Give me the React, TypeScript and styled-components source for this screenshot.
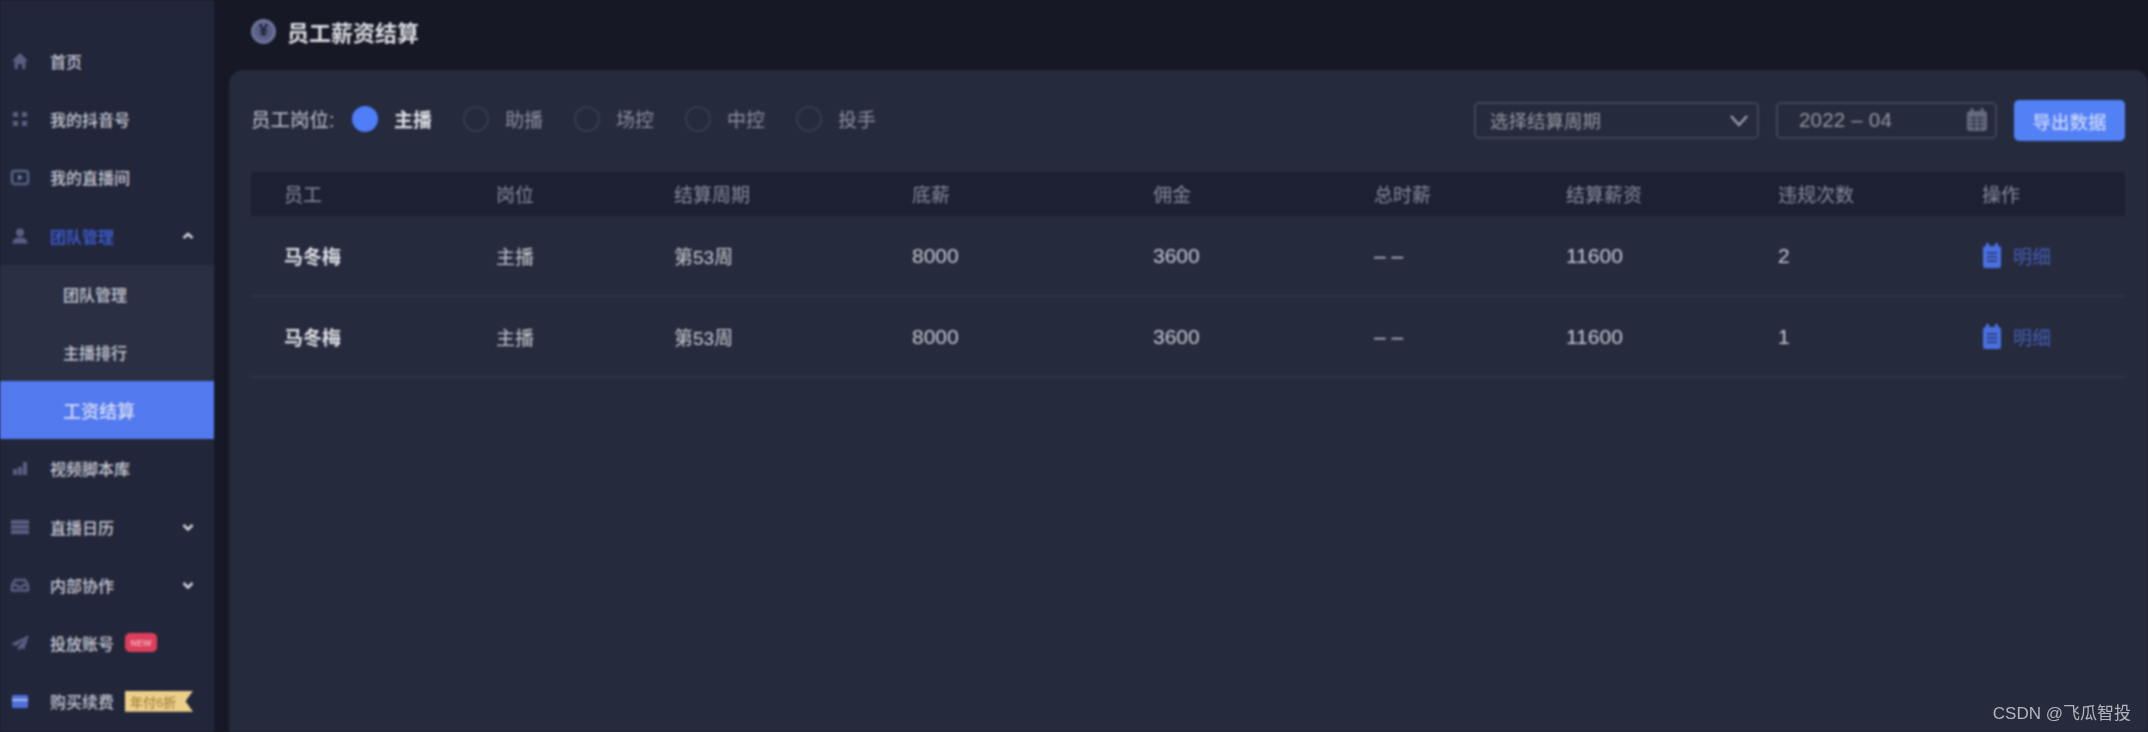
import React from "react";
import styled, { createGlobalStyle } from "styled-components";

const Global = createGlobalStyle`
  html, body { margin: 0; padding: 0; background: #171825; }
  body { font-family: "Liberation Sans", "Noto Sans CJK SC", sans-serif; }
`;

const Page = styled.div`
  position: relative;
  width: 2148px;
  height: 732px;
  overflow: hidden;
  background: #171825;
`;
const Shell = styled.div`
  display: flex;
  width: 2148px;
  height: 732px;
  filter: blur(0.8px);
`;
const Sidebar = styled.nav`
  width: 214px;
  flex: none;
  display: flex;
  flex-direction: column;
  padding-top: 32px;
  background: #22263a;
  box-sizing: border-box;
`;
const NavRow = styled.div<{ $tone?: string }>`
  height: 58.2px;
  flex: none;
  display: flex;
  align-items: center;
  padding: 0 18px 0 10px;
  box-sizing: border-box;
  font-size: 16px;
  font-weight: 500;
  color: ${(p) => (p.$tone === "blue" ? "#3e5fd6" : "#c6c8d3")};
`;
const NavIcon = styled.svg`
  width: 20px;
  height: 20px;
  flex: none;
  margin-right: 20px;
`;
const Chevron = styled.svg`
  width: 16px;
  height: 16px;
  margin-left: auto;
  color: #d0d2da;
`;
const SubRow = styled.div<{ $active?: boolean }>`
  height: 58.2px;
  flex: none;
  display: flex;
  align-items: center;
  padding-left: 63px;
  box-sizing: border-box;
  font-size: ${(p) => (p.$active ? 18 : 16)}px;
  font-weight: 500;
  color: ${(p) => (p.$active ? "#d5dcf8" : "#c6c8d3")};
  background: ${(p) => (p.$active ? "#5279ee" : "#2b2f44")};
`;
const NewBadge = styled.span`
  width: 32px;
  height: 19px;
  margin-left: 11px;
  border-radius: 5px;
  background: #dc3f5c;
  color: #f3a5b3;
  font-size: 9px;
  font-weight: 700;
  display: flex;
  align-items: center;
  justify-content: center;
`;
const GoldBadge = styled.span`
  width: 68px;
  height: 21px;
  margin-left: 11px;
  background: #ecd08a;
  color: #a98640;
  font-size: 13px;
  display: flex;
  align-items: center;
  padding-left: 5px;
  box-sizing: border-box;
  clip-path: polygon(0 0, 100% 0, 89% 50%, 100% 100%, 0 100%);
`;
const Main = styled.main`
  flex: 1;
  min-width: 0;
  display: flex;
  flex-direction: column;
`;
const TitleBar = styled.header`
  height: 70px;
  flex: none;
  display: flex;
  align-items: center;
  gap: 11px;
  padding: 0 0 8px 37px;
  box-sizing: border-box;
`;
const TitleIcon = styled.div`
  width: 25px;
  height: 25px;
  border-radius: 50%;
  background: #5a6088;
  border: 3px solid #6d739a;
  box-sizing: border-box;
  color: #1d2034;
  font-size: 17px;
  font-weight: 700;
  display: flex;
  align-items: center;
  justify-content: center;
`;
const Title = styled.h1`
  margin: 0;
  font-size: 22px;
  font-weight: 700;
  color: #dcdde3;
`;
const Panel = styled.section`
  flex: 1;
  margin-left: 15px;
  padding: 30px 23px 0 22px;
  border-radius: 14px 14px 0 0;
  background: #252a3d;
  box-sizing: border-box;
`;
const FilterBar = styled.div`
  height: 41px;
  display: flex;
  align-items: center;
`;
const FilterLabel = styled.span`
  width: 101px;
  padding-bottom: 4px;
  font-size: 19.5px;
  white-space: nowrap;
  color: #c3c5cf;
`;
const RadioItem = styled.label<{ $on?: boolean }>`
  width: 111px;
  padding-bottom: 4px;
  display: flex;
  align-items: center;
  gap: 16px;
  font-size: 19px;
  font-weight: ${(p) => (p.$on ? 700 : 400)};
  color: ${(p) => (p.$on ? "#e0e1e7" : "#8b8e9f")};
`;
const RadioDot = styled.span<{ $on?: boolean }>`
  width: 26px;
  height: 26px;
  flex: none;
  border-radius: 50%;
  box-sizing: border-box;
  background: ${(p) => (p.$on ? "#4f7ef8" : "transparent")};
  border: 2px solid ${(p) => (p.$on ? "#4f7ef8" : "#383c50")};
`;
const Spacer = styled.div`
  flex: 1;
`;
const Field = styled.div<{ $w: number }>`
  width: ${(p) => p.$w}px;
  height: 37px;
  margin: 0 17px 1px 0;
  padding: 0 6px 0 14px;
  box-sizing: border-box;
  display: flex;
  align-items: center;
  justify-content: space-between;
  border: 2px solid #40445a;
  border-radius: 5px;
  font-size: 18.500px;
  color: #94979f;
`;
const DateText = styled.span`
  padding-left: 7px;
  font-size: 20.500px;
  letter-spacing: 0.2px;
`;
const ExportButton = styled.button`
  width: 111px;
  height: 41px;
  border: 0;
  padding: 0;
  border-radius: 5px;
  background: #5280f5;
  color: #c9d6fa;
  font-family: inherit;
  font-size: 18.500px;
  font-weight: 500;
`;
const Table = styled.div`
  margin-top: 31px;
`;
const Row = styled.div<{ $head?: boolean }>`
  display: grid;
  grid-template-columns: 212px 178px 238px 241px 221px 192px 212px 204px 1fr;
  align-items: center;
  height: ${(p) => (p.$head ? 44 : 81)}px;
  padding: ${(p) => (p.$head ? "0 0 2px 33px" : "0 0 0 33px")};
  box-sizing: border-box;
  font-size: 19px;
  color: ${(p) => (p.$head ? "#888b9c" : "#c8cad2")};
  background: ${(p) => (p.$head ? "#1d2033" : "transparent")};
  border-bottom: ${(p) => (p.$head ? "0" : "2px solid #30344a")};
`;
const NameCell = styled.span`
  font-weight: 700;
  color: #dfe0e6;
`;
const NumCell = styled.span`
  font-size: 21px;
`;
const Action = styled.span`
  display: flex;
  align-items: center;
  gap: 11px;
  color: #465fb8;
`;
const Watermark = styled.div`
  position: absolute;
  right: 17px;
  bottom: 8px;
  font-size: 17px;
  line-height: 20px;
  color: #b4b5ba;
`;

const c = "#5a5f82";
const icons: Record<string, React.ReactNode> = {
  home: <path fill={c} d="M10 2 2 10h2.500v8H8v-5h4v5h3.500v-8H18z" />,
  grid: (
    <g fill={c}>
      <rect x="3" y="3" width="5" height="5" />
      <rect x="12" y="3" width="5" height="5" />
      <rect x="3" y="12" width="5" height="5" />
      <rect x="12" y="12" width="5" height="5" />
    </g>
  ),
  live: (
    <g>
      <rect x="2" y="4" width="16" height="13" rx="2.500" fill="none" stroke="#566489" strokeWidth="2.400" />
      <path fill="#6d7fa8" d="M8 7.500v6l5-3z" />
    </g>
  ),
  user: (
    <g fill={c}>
      <circle cx="10" cy="6.500" r="4" />
      <path d="M2.500 17.500c0-4 3-6 7.500-6s7.500 2 7.500 6z" />
    </g>
  ),
  chart: (
    <g fill={c}>
      <rect x="3" y="11" width="4" height="6" />
      <rect x="8" y="9" width="4" height="8" />
      <rect x="13" y="4" width="4" height="13" />
    </g>
  ),
  cal: (
    <g fill={c}>
      <rect x="1" y="3" width="18" height="4" />
      <rect x="1" y="8" width="18" height="4" />
      <rect x="1" y="13" width="18" height="4" />
    </g>
  ),
  tray: <path fill="none" stroke={c} strokeWidth="2.400" d="M5 5h10l3 5v5.500H2V10zM2 10h5l1 2h4l1-2h5" />,
  plane: <path fill={c} d="M19 2 1 11l5 2 9-7-7 8v4l3-3 3 2z" />,
  card: (
    <g>
      <rect x="2" y="4" width="16" height="13" rx="1.500" fill="#4f70dc" />
      <rect x="2" y="8" width="16" height="2" fill="#a8b9ee" />
    </g>
  ),
};

const Up = () => (
  <Chevron viewBox="0 0 16 16">
    <path d="M3.500 10 8 6l4.500 4" fill="none" stroke="currentColor" strokeWidth="2.600" />
  </Chevron>
);
const Down = () => (
  <Chevron viewBox="0 0 16 16">
    <path d="M3.500 6 8 10.500 12.500 6" fill="none" stroke="currentColor" strokeWidth="2.600" />
  </Chevron>
);

const Item = ({ icon, label, tone, children }: { icon: string; label: string; tone?: string; children?: React.ReactNode }) => (
  <NavRow $tone={tone}>
    <NavIcon viewBox="0 0 20 20">{icons[icon]}</NavIcon>
    {label}
    {children}
  </NavRow>
);

const DetailIcon = () => (
  <svg width="20" height="26" viewBox="0 0 20 26">
    <rect x="1" y="3" width="18" height="22" rx="2.500" fill="#4a70e0" />
    <rect x="4" y="0" width="3" height="5" fill="#4a70e0" />
    <rect x="13" y="0" width="3" height="5" fill="#4a70e0" />
    <path d="M5 10h10M5 14h10M5 18h10" stroke="#253063" strokeWidth="1.500" />
  </svg>
);

const rows = [{ count: "2" }, { count: "1" }];
const heads = ["员工", "岗位", "结算周期", "底薪", "佣金", "总时薪", "结算薪资", "违规次数", "操作"];
const roles = ["主播", "助播", "场控", "中控", "投手"];

export default function App() {
  return (
    <Page>
      <Global />
      <Shell>
        <Sidebar>
          <Item icon="home" label="首页" />
          <Item icon="grid" label="我的抖音号" />
          <Item icon="live" label="我的直播间" />
          <Item icon="user" label="团队管理" tone="blue">
            <Up />
          </Item>
          <SubRow>团队管理</SubRow>
          <SubRow>主播排行</SubRow>
          <SubRow $active>工资结算</SubRow>
          <Item icon="chart" label="视频脚本库" />
          <Item icon="cal" label="直播日历">
            <Down />
          </Item>
          <Item icon="tray" label="内部协作">
            <Down />
          </Item>
          <Item icon="plane" label="投放账号">
            <NewBadge>NEW</NewBadge>
          </Item>
          <Item icon="card" label="购买续费">
            <GoldBadge>年付6折</GoldBadge>
          </Item>
        </Sidebar>
        <Main>
          <TitleBar>
            <TitleIcon>¥</TitleIcon>
            <Title>员工薪资结算</Title>
          </TitleBar>
          <Panel>
            <FilterBar>
              <FilterLabel>员工岗位:</FilterLabel>
              {roles.map((r, i) => (
                <RadioItem key={r} $on={i === 0}>
                  <RadioDot $on={i === 0} />
                  {r}
                </RadioItem>
              ))}
              <Spacer />
              <Field $w={285}>
                选择结算周期
                <svg width="24" height="24" viewBox="0 0 24 24">
                  <path d="M4 8l8 9 8-9" fill="none" stroke="#9a9dab" strokeWidth="2.400" />
                </svg>
              </Field>
              <Field $w={221}>
                <DateText>2022 – 04</DateText>
                <svg width="24" height="26" viewBox="0 0 24 26">
                  <rect x="2" y="4" width="20" height="20" rx="3" fill="#666b80" />
                  <path d="M7 1v5M17 1v5" stroke="#666b80" strokeWidth="2.500" />
                  <path d="M4 11h16M4 15h16M4 19h16M9 9v14M15 9v14" stroke="#2e3246" strokeWidth="1.200" />
                </svg>
              </Field>
              <ExportButton>导出数据</ExportButton>
            </FilterBar>
            <Table>
              <Row $head>
                {heads.map((h) => (
                  <span key={h}>{h}</span>
                ))}
              </Row>
              {rows.map((r) => (
                <Row key={r.count}>
                  <NameCell>马冬梅</NameCell>
                  <span>主播</span>
                  <span>第53周</span>
                  <NumCell>8000</NumCell>
                  <NumCell>3600</NumCell>
                  <NumCell>– –</NumCell>
                  <NumCell>11600</NumCell>
                  <NumCell>{r.count}</NumCell>
                  <Action>
                    <DetailIcon />
                    明细
                  </Action>
                </Row>
              ))}
            </Table>
          </Panel>
        </Main>
      </Shell>
      <Watermark>CSDN @飞瓜智投</Watermark>
    </Page>
  );
}
